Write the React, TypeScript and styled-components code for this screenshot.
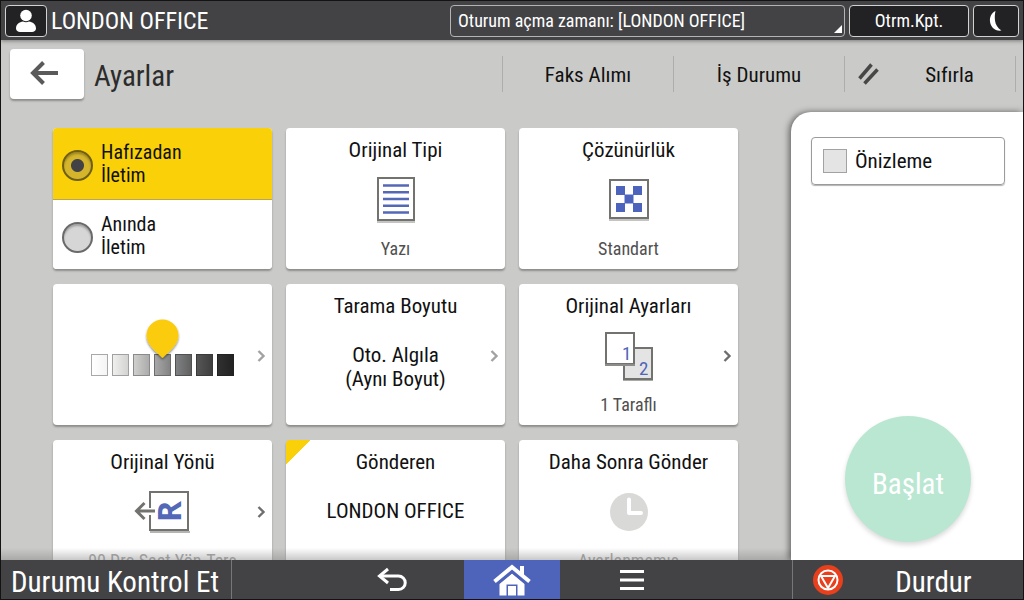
import React from "react";
import styled, { createGlobalStyle, css } from "styled-components";

const fontStack = `"Roboto Condensed", "Liberation Sans Narrow", Roboto, sans-serif`;

const GlobalStyle = createGlobalStyle`
  *, *::before, *::after { box-sizing: border-box; }
  body { margin: 0; background: #131314; }
  button, input, select { font: inherit; color: inherit; margin: 0; }
  button { border: 0; padding: 0; background: none; cursor: pointer; }
  h1 { margin: 0; font-weight: 400; }
  svg { display: block; flex: none; }
`;

const Screen = styled.div`
  height: 100vh;
  display: flex;
  flex-direction: column;
  border: 1px solid #131314;
  background: #cacac8;
  color: #111;
  font-family: ${fontStack};
  font-size: 21px;
  line-height: 24px;
  overflow: hidden;
`;

/* ---- status bar ---- */

const StatusBar = styled.header`
  display: flex;
  align-items: center;
  gap: 4px;
  height: 39px;
  flex: none;
  padding: 0 4px;
  background: #434346;
  color: #fff;
  box-shadow: 0 1px 4px rgba(0, 0, 0, 0.4);
  position: relative;
`;

const StatusButton = styled.button<{ $width: number }>`
  width: ${(p) => p.$width}px;
  height: 32px;
  display: flex;
  align-items: center;
  justify-content: center;
  border: 1px solid #d2d2d2;
  border-radius: 4px;
  background: #222224;
  font-size: 18px;
`;

const UserName = styled.span`
  font-size: 24px;
  flex: 1;
`;

const SessionField = styled.div`
  position: relative;
  width: 395px;
  height: 32px;
`;

const SessionSelect = styled.select`
  appearance: none;
  width: 100%;
  height: 100%;
  padding: 0 7px;
  border: 1px solid #b4b4b6;
  border-radius: 4px;
  background: #434346;
  font-size: 18px;
`;

const SelectCorner = styled.svg`
  position: absolute;
  right: 3px;
  bottom: 4px;
  pointer-events: none;
`;

/* ---- toolbar ---- */

const Toolbar = styled.div`
  display: flex;
  align-items: flex-start;
  height: 72px;
  flex: none;
  padding: 9px 7px 0 9px;
`;

const BackButton = styled.button`
  width: 74px;
  height: 50px;
  display: flex;
  align-items: center;
  justify-content: center;
  padding-right: 3px;
  border-radius: 4px;
  background: #fff;
  box-shadow: 0 2px 2px rgba(0, 0, 0, 0.3);
`;

const PageTitle = styled.h1`
  flex: 1;
  margin-left: 10px;
  font-size: 29px;
  line-height: 54px;
  color: #2c2c2c;
`;

const ToolActions = styled.div`
  display: flex;
  margin-top: 7px;
  border-right: 1px solid #adadab;
`;

const ToolAction = styled.button`
  width: 171px;
  height: 36px;
  display: flex;
  align-items: center;
  gap: 17px;
  padding: 0 13px;
  border-left: 1px solid #adadab;
`;

const ActionLabel = styled.span`
  flex: 1;
  padding-top: 2px;
  text-align: center;
`;

/* ---- main area ---- */

const Main = styled.main`
  flex: 1;
  min-height: 0;
  display: flex;
`;

const Scroller = styled.section`
  position: relative;
  flex: 1;
  overflow: hidden;
  padding: 16px 53px 0 52px;
`;

const CardGrid = styled.div`
  display: grid;
  grid-template-columns: repeat(3, 1fr);
  grid-auto-rows: 141px;
  column-gap: 14px;
  row-gap: 15px;
`;

const BottomFade = styled.div`
  position: absolute;
  left: 0;
  right: 0;
  bottom: 0;
  height: 12px;
  background: linear-gradient(rgba(120, 120, 120, 0), rgba(120, 120, 120, 0.4));
  pointer-events: none;
`;

const cardSurface = css`
  border-radius: 4px;
  background: #fff;
  box-shadow: 0 2px 2px rgba(0, 0, 0, 0.3);
  overflow: hidden;
`;

const Card = styled.button<{ $marked?: boolean }>`
  ${cardSurface}
  position: relative;
  display: flex;
  flex-direction: column;
  padding: 10px 0 8px;
  text-align: center;
  ${(p) =>
    p.$marked &&
    css`
      background: linear-gradient(135deg, #fad109 17px, #fff 17px);
    `}
`;

const CardTitle = styled.span`
  display: block;
  width: 100%;
`;

const CardBody = styled.span`
  flex: 1;
  width: 100%;
  display: flex;
  align-items: center;
  justify-content: center;
`;

const CardValue = styled.span`
  display: block;
  width: 100%;
  padding-top: 25px;
`;

const CardCaption = styled.span<{ $dim?: boolean }>`
  display: block;
  width: 100%;
  font-size: 18px;
  color: ${(p) => (p.$dim ? "#a8a8a8" : "#505050")};
`;

const ChevronSvg = styled.svg`
  position: absolute;
  right: 6px;
  top: 66px;
`;

const RadioCard = styled.fieldset`
  ${cardSurface}
  margin: 0;
  padding: 0;
  border: 0;
  min-width: 0;
  display: grid;
  grid-template-rows: 72px 1fr;
`;

const RadioRow = styled.label<{ $on?: boolean }>`
  display: flex;
  align-items: flex-start;
  gap: 8px;
  padding: 13px 9px 0;
  font-size: 20px;
  line-height: 23px;
  background: ${(p) => (p.$on ? "#fad109" : "#fff")};
  border-bottom: ${(p) => (p.$on ? "1px solid #b9a556" : "0")};
`;

const RadioInput = styled.input`
  && { margin-top: 9px; }
  appearance: none;
  flex: none;
  width: 31px;
  height: 31px;
  border: 2px solid #6a6a6a;
  border-radius: 50%;
  background: #d6d6d6;
  box-shadow: inset 0 2px 2px rgba(0, 0, 0, 0.25);
  &:checked {
    border-color: #6f5f14;
    background: radial-gradient(circle, #414146 6px, #d5b52c 7px);
  }
`;

const RadioText = styled.span`
  width: 90px;
`;

/* ---- side panel ---- */

const SidePanel = styled.aside`
  width: 232px;
  flex: none;
  position: relative;
  display: flex;
  flex-direction: column;
  justify-content: space-between;
  align-items: center;
  padding: 25px 18px 18px 20px;
  border-top-left-radius: 20px;
  background: #fff;
  box-shadow: -2px 0 6px rgba(0, 0, 0, 0.5);
`;

const PreviewToggle = styled.label`
  width: 100%;
  height: 48px;
  display: flex;
  align-items: center;
  gap: 8px;
  padding: 0 11px;
  border: 1px solid #9b9b9b;
  border-radius: 4px;
  box-shadow: 0 1px 1px rgba(0, 0, 0, 0.3);
`;

const PreviewBox = styled.input`
  appearance: none;
  width: 24px;
  height: 24px;
  border: 1px solid #a2a2a2;
  background: #e4e4e4;
`;

const StartButton = styled.button`
  width: 126px;
  height: 126px;
  padding-top: 10px;
  border-radius: 50%;
  background: #b9e7d2;
  color: #fff;
  font-size: 29px;
  box-shadow: 0 3px 5px rgba(0, 0, 0, 0.15);
`;

/* ---- bottom bar ---- */

const BottomBar = styled.footer`
  flex: none;
  height: 39px;
  display: flex;
  background: #434346;
  color: #fff;
  font-size: 29px;
  position: relative;
`;

const StatusCheck = styled.button`
  width: 231px;
  padding: 4px 0 0 10px;
  text-align: left;
  white-space: nowrap;
  border-right: 1px solid #77777a;
`;

const NavKeys = styled.nav`
  flex: 1;
  display: flex;
  justify-content: center;
`;

const NavKey = styled.button<{ $active?: boolean }>`
  width: ${(p) => (p.$active ? 96 : 144)}px;
  display: flex;
  align-items: center;
  justify-content: center;
  background: ${(p) => (p.$active ? "#4e63ba" : "transparent")};
`;

const StopButton = styled.button`
  width: 231px;
  display: flex;
  align-items: center;
  padding: 0 20px;
  border-left: 1px solid #77777a;
`;

const StopLabel = styled.span`
  flex: 1;
  padding: 4px 0 0 21px;
  text-align: center;
`;

/* ---- drawings ---- */

const Chevron = ({ color = "#6e6e6e" }: { color?: string }) => (
  <ChevronSvg width="9" height="12" viewBox="0 0 9 12" fill="none" stroke={color} strokeWidth="2.400">
    <path d="M1.500 1l5 5-5 5" />
  </ChevronSvg>
);

const UserIcon = () => (
  <svg width="22" height="24" viewBox="0 0 22 24" fill="#fff">
    <circle cx="11" cy="6.500" r="5.800" />
    <path d="M1 19.500c0-4.500 3.500-6.500 7-7 2 1 4 1 6 0 3.500.5 7 2.500 7 7 0 2-2 3.500-4 3.500H5c-2 0-4-1.500-4-3.500z" />
  </svg>
);

const MoonIcon = () => (
  <svg width="14" height="22" viewBox="0 0 14 22" fill="#fff">
    <path d="M6.500 1C2.500 3 .5 7 1 11.500 1.500 17 6 21.500 12.500 20.500 8.500 18 6.500 14.500 6 10.500 5.600 7 5.800 4 6.500 1z" />
  </svg>
);

const ArrowLeftIcon = () => (
  <svg width="31" height="26" viewBox="0 0 31 26" fill="none" stroke="#5a5a5a" strokeWidth="4">
    <path d="M3 12h25M13.500 1.500L3 12l10.500 10.500" />
  </svg>
);

const ResetIcon = () => (
  <svg width="22" height="24" viewBox="0 0 22 24" fill="none" stroke="#474747" strokeWidth="3.500">
    <path d="M1.500 16.500L13.500 2.500M6.500 21.500L19.500 7.500" />
  </svg>
);

const TextPageIcon = () => (
  <svg width="38" height="46" viewBox="0 0 38 46">
    <rect x="0" y="44" width="38" height="2" fill="#c4c4c2" />
    <rect x="1" y="1" width="36" height="42" fill="#fff" stroke="#72726f" strokeWidth="2" />
    <path d="M6 8.500h26M6 15.200h26M6 22h26M6 28.700h26M6 35.500h26" stroke="#5468b8" strokeWidth="2.400" />
  </svg>
);

const ResolutionIcon = () => (
  <svg width="40" height="42" viewBox="0 0 40 42">
    <rect x="0" y="40" width="40" height="2" fill="#c4c4c2" />
    <rect x="1" y="1" width="38" height="38" fill="#fff" stroke="#72726f" strokeWidth="2" />
    <path d="M7 7h9v9H7zM24 7h9v9h-9zM15.500 15.500h9v9h-9zM7 24h9v9H7zM24 24h9v9h-9z" fill="#4d64bd" />
  </svg>
);

const densitySteps = [
  ["#ffffff", "#f4f4f4", "#a8a8a8"],
  ["#f0f0ee", "#d2d2d0", "#a0a0a0"],
  ["#d0d0ce", "#aaaaaa", "#8a8a8a"],
  ["#a9a9a9", "#828282", "#6c6c6c"],
  ["#808284", "#606060", "#505050"],
  ["#565656", "#3e3e3e", "#3a3a3a"],
  ["#303030", "#222222", "#222222"],
];

const DensityIcon = () => (
  <svg width="144" height="78" viewBox="0 0 144 78">
    <defs>
      {densitySteps.map(([from, to], i) => (
        <linearGradient key={i} id={`step${i}`}>
          <stop offset="0" stopColor={from} />
          <stop offset="1" stopColor={to} />
        </linearGradient>
      ))}
      <filter id="pinShadow" x="-20%" y="-20%" width="140%" height="150%">
        <feDropShadow dx="0" dy="1.500" stdDeviation="1.200" floodOpacity="0.5" />
      </filter>
    </defs>
    {densitySteps.map(([, , edge], i) => (
      <rect key={i} x={0.5 + i * 21} y="37.500" width="16" height="21" fill={`url(#step${i})`} stroke={edge} />
    ))}
    <path
      d="M71.500 41C66 35.500 55.500 28 55.500 18.500a16 16 0 0 1 32 0C87.500 28 77 35.500 71.500 41z"
      fill="#fbcc08"
      filter="url(#pinShadow)"
    />
  </svg>
);

const SidesIcon = () => (
  <svg width="50" height="50" viewBox="0 0 50 50" fontSize="19" fill="#5064b8">
    <rect x="19" y="48" width="30" height="2" fill="#a9a9a7" />
    <rect x="20" y="17" width="28" height="31" fill="#e4e4e4" stroke="#72726f" strokeWidth="2" />
    <rect x="2" y="2" width="28" height="31" fill="#fff" stroke="#72726f" strokeWidth="2" />
    <rect x="1" y="33" width="30" height="2" fill="#8c8c8a" />
    <text x="18" y="29">1</text>
    <text x="35" y="44">2</text>
  </svg>
);

const OrientationIcon = () => (
  <svg width="58" height="42" viewBox="0 0 58 42">
    <rect x="16" y="40" width="40" height="2" fill="#b5b5b3" />
    <path d="M16 17V1h38v38H16V24" fill="none" stroke="#72726f" strokeWidth="2" />
    <path d="M2 20h19M10.500 12L2.500 20l8 8" fill="none" stroke="#72726f" strokeWidth="3" />
    <text
      transform="translate(47 31) rotate(-90)"
      fontFamily={`"Open Sans", sans-serif`}
      fontWeight="700"
      fontSize="32"
      fill="#5468b8"
    >
      R
    </text>
  </svg>
);

const ClockIcon = () => (
  <svg width="38" height="38" viewBox="0 0 38 38">
    <circle cx="19" cy="19" r="19" fill="#d9d9d7" />
    <path d="M19 6.500V20h12" fill="none" stroke="#fff" strokeWidth="4" strokeLinecap="round" strokeLinejoin="round" />
  </svg>
);

const ReturnIcon = () => (
  <svg width="32" height="26" viewBox="0 0 32 26" fill="none" stroke="#fff" strokeWidth="3">
    <path d="M4 9h18.500a6.500 6.500 0 0 1 0 13.500H14" />
    <path d="M12 2L3.500 9l8.500 7" />
  </svg>
);

const HomeIcon = () => (
  <svg width="38" height="32" viewBox="0 0 38 32">
    <path d="M19 9.500L31.500 20v11.500h-7v-11h-11v11h-7V20z" fill="#fff" />
    <path d="M15 22h8v9.500h-8z" fill="#fff" />
    <path d="M27 2h4v10.500l-4-4z" fill="#fff" />
    <path d="M1.500 17.500L19 3 36.500 17.500" fill="none" stroke="#fff" strokeWidth="4" />
    <path d="M4 20.500L19 8.500 34 20.500" fill="none" stroke="#4e63ba" strokeWidth="1.500" />
  </svg>
);

const MenuIcon = () => (
  <svg width="24" height="20" viewBox="0 0 24 20" stroke="#fff" strokeWidth="3">
    <path d="M0 1.500h24M0 10h24M0 18.500h24" />
  </svg>
);

const StopIcon = () => (
  <svg width="30" height="30" viewBox="0 0 30 30">
    <circle cx="15" cy="15" r="15" fill="#e8401c" />
    <circle cx="15" cy="15" r="9.500" fill="none" stroke="#fff" strokeWidth="2" />
    <path d="M8 11h14l-7 12z" fill="none" stroke="#fff" strokeWidth="2" strokeLinejoin="round" />
  </svg>
);

/* ---- page ---- */

export default function App() {
  return (
    <>
      <GlobalStyle />
      <Screen>
        <StatusBar>
          <StatusButton $width={42} aria-label="Kullanıcı">
            <UserIcon />
          </StatusButton>
          <UserName>LONDON OFFICE</UserName>
          <SessionField>
            <SessionSelect aria-label="Oturum" defaultValue="session">
              <option value="session">Oturum açma zamanı: [LONDON OFFICE]</option>
            </SessionSelect>
            <SelectCorner width="8" height="8" viewBox="0 0 8 8" fill="#fff">
              <path d="M8 0v8H0z" />
            </SelectCorner>
          </SessionField>
          <StatusButton $width={120}>Otrm.Kpt.</StatusButton>
          <StatusButton $width={46} aria-label="Uyku">
            <MoonIcon />
          </StatusButton>
        </StatusBar>

        <Toolbar>
          <BackButton aria-label="Geri">
            <ArrowLeftIcon />
          </BackButton>
          <PageTitle>Ayarlar</PageTitle>
          <ToolActions>
            <ToolAction>
              <ActionLabel>Faks Alımı</ActionLabel>
            </ToolAction>
            <ToolAction>
              <ActionLabel>İş Durumu</ActionLabel>
            </ToolAction>
            <ToolAction>
              <ResetIcon />
              <ActionLabel>Sıfırla</ActionLabel>
            </ToolAction>
          </ToolActions>
        </Toolbar>

        <Main>
          <Scroller>
            <CardGrid>
              <RadioCard aria-label="İletim">
                <RadioRow $on>
                  <RadioInput type="radio" name="send" defaultChecked />
                  <RadioText>Hafızadan<br />İletim</RadioText>
                </RadioRow>
                <RadioRow>
                  <RadioInput type="radio" name="send" />
                  <RadioText>Anında<br />İletim</RadioText>
                </RadioRow>
              </RadioCard>
              <Card>
                <CardTitle>Orijinal Tipi</CardTitle>
                <CardBody><TextPageIcon /></CardBody>
                <CardCaption>Yazı</CardCaption>
              </Card>
              <Card>
                <CardTitle>Çözünürlük</CardTitle>
                <CardBody><ResolutionIcon /></CardBody>
                <CardCaption>Standart</CardCaption>
              </Card>
              <Card aria-label="Yoğunluk">
                <CardBody><DensityIcon /></CardBody>
                <Chevron color="#a2a2a2" />
              </Card>
              <Card>
                <CardTitle>Tarama Boyutu</CardTitle>
                <CardValue>Oto. Algıla<br />(Aynı Boyut)</CardValue>
                <Chevron color="#a2a2a2" />
              </Card>
              <Card>
                <CardTitle>Orijinal Ayarları</CardTitle>
                <CardBody><SidesIcon /></CardBody>
                <CardCaption>1 Taraflı</CardCaption>
                <Chevron />
              </Card>
              <Card>
                <CardTitle>Orijinal Yönü</CardTitle>
                <CardBody><OrientationIcon /></CardBody>
                <CardCaption $dim>90 Drc.Saat Yön.Ters</CardCaption>
                <Chevron />
              </Card>
              <Card $marked>
                <CardTitle>Gönderen</CardTitle>
                <CardValue>LONDON OFFICE</CardValue>
              </Card>
              <Card>
                <CardTitle>Daha Sonra Gönder</CardTitle>
                <CardBody><ClockIcon /></CardBody>
                <CardCaption $dim>Ayarlanmamış</CardCaption>
              </Card>
            </CardGrid>
            <BottomFade />
          </Scroller>
          <SidePanel>
            <PreviewToggle>
              <PreviewBox type="checkbox" />
              Önizleme
            </PreviewToggle>
            <StartButton>Başlat</StartButton>
          </SidePanel>
        </Main>

        <BottomBar>
          <StatusCheck>Durumu Kontrol Et</StatusCheck>
          <NavKeys>
            <NavKey aria-label="Önceki"><ReturnIcon /></NavKey>
            <NavKey $active aria-label="Ana ekran"><HomeIcon /></NavKey>
            <NavKey aria-label="Menü"><MenuIcon /></NavKey>
          </NavKeys>
          <StopButton>
            <StopIcon />
            <StopLabel>Durdur</StopLabel>
          </StopButton>
        </BottomBar>
      </Screen>
    </>
  );
}
